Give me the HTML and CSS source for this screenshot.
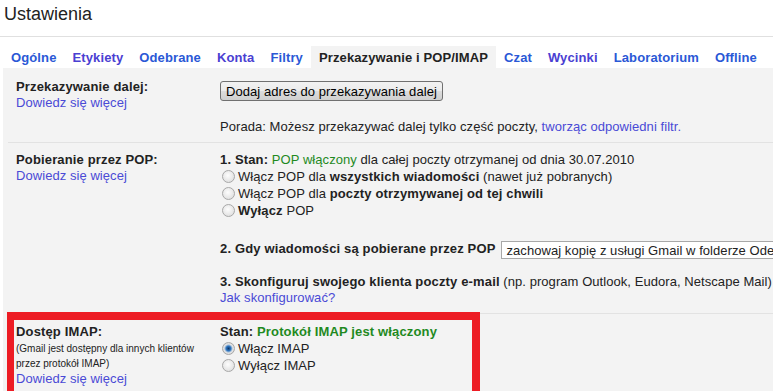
FILE: index.html
```html
<!DOCTYPE html>
<html lang="pl">
<head>
    <meta charset="UTF-8">
    <meta name="viewport" content="width=device-width, initial-scale=1.0">
    <title>Ustawienia</title>
    <link rel="stylesheet" href="styles.css">
</head>
<body>
    <div class="header">Ustawienia</div>

    <div class="tabs">
        <a class="tab" href="#">Ogólne</a>
        <a class="tab visited" href="#">Etykiety</a>
        <a class="tab" href="#">Odebrane</a>
        <a class="tab visited" href="#">Konta</a>
        <a class="tab" href="#">Filtry</a>
        <span class="tab active">Przekazywanie i POP/IMAP</span>
        <a class="tab" href="#">Czat</a>
        <a class="tab visited" href="#">Wycinki</a>
        <a class="tab" href="#">Laboratorium</a>
        <a class="tab" href="#">Offline</a>
    </div>

    <div class="panel">
        <div class="row first">
            <div class="label-col">
                <div class="label">Przekazywanie dalej:</div>
                <a class="link" href="#">Dowiedz się więcej</a>
            </div>
            <div class="value-col">
                <button type="button" class="btn">Dodaj adres do przekazywania dalej</button>
                <p class="tip">Porada: Możesz przekazywać dalej tylko część poczty, <a class="link" href="#">tworząc odpowiedni filtr.</a></p>
            </div>
        </div>

        <div class="row">
            <div class="label-col">
                <div class="label">Pobieranie przez POP:</div>
                <a class="link" href="#">Dowiedz się więcej</a>
            </div>
            <div class="value-col">
                <div class="line"><b>1. Stan:</b> <span class="on">POP włączony</span> dla całej poczty otrzymanej od dnia 30.07.2010</div>
                <label class="choice"><input type="radio" name="pop">Włącz POP dla <b>wszystkich wiadomości</b> (nawet już pobranych)</label>
                <label class="choice"><input type="radio" name="pop">Włącz POP dla <b>poczty otrzymywanej od tej chwili</b></label>
                <label class="choice"><input type="radio" name="pop"><b>Wyłącz</b> POP</label>

                <div class="step step-two">
                    <b>2. Gdy wiadomości są pobierane przez POP</b>
                    <select class="select">
                        <option>zachowaj kopię z usługi Gmail w folderze Odebrane</option>
                    </select>
                </div>

                <div class="step step-three"><b>3. Skonfiguruj swojego klienta poczty e-mail</b> (np. program Outlook, Eudora, Netscape Mail)</div>
                <a class="link how" href="#">Jak skonfigurować?</a>
            </div>
        </div>

        <div class="row imap">
            <div class="highlight"></div>
            <div class="label-col">
                <div class="label">Dostęp IMAP:</div>
                <div class="note">(Gmail jest dostępny dla innych klientów<br>przez protokół IMAP)</div>
                <a class="link" href="#">Dowiedz się więcej</a>
            </div>
            <div class="value-col">
                <div class="line"><b>Stan: <span class="on">Protokół IMAP jest włączony</span></b></div>
                <label class="choice"><input type="radio" name="imap" checked>Włącz IMAP</label>
                <label class="choice"><input type="radio" name="imap">Wyłącz IMAP</label>
            </div>
        </div>
    </div>
</body>
</html>
```

FILE: styles.css
```css
body {
    font-family: "Liberation Sans", Arial, sans-serif;
    font-size: 13px;
    letter-spacing: 0.06px;
    color: #222;
    background-color: #fff;
    margin: 0;
    padding: 0;
    overflow: hidden;
}
a {
    text-decoration: none;
}
b {
    letter-spacing: 0.15px;
}
.header {
    height: 32px;
    padding: 4px 0 0 4px;
    font-size: 18px;
    line-height: 21px;
    letter-spacing: 0;
    color: #222;
    border-bottom: 1px solid #e0e0e0;
}
.tabs {
    display: flex;
    margin: 9px 0 0 3px;
    white-space: nowrap;
}
.tab {
    padding: 0 8px;
    height: 22px;
    line-height: 23px;
    font-weight: bold;
    letter-spacing: 0.12px;
    color: #2a58d6;
}
.tab.visited {
    color: #4a40d2;
}
.tab.active {
    color: #222;
    background-color: #f3f3f3;
}
.panel {
    margin-left: 3px;
    background-color: #f3f3f3;
    padding-bottom: 40px;
}
.row {
    position: relative;
    display: flex;
    margin-left: 5px;
    padding: 8px 0 8px 8px;
    border-top: 1px solid #e2e2e2;
    white-space: nowrap;
}
.row.first {
    border-top: none;
    padding-top: 11px;
    padding-bottom: 7px;
}
.row.imap {
    padding-top: 9px;
}
.label-col {
    width: 204px;
    flex-shrink: 0;
}
.label {
    font-weight: bold;
    letter-spacing: 0.15px;
    line-height: 17px;
}
.row.first .label {
    line-height: 16px;
}
.link {
    display: block;
    color: #4a4ad6;
    line-height: 16px;
}
.tip .link {
    display: inline;
}
.value-col {
    flex: 1;
}
.btn {
    display: block;
    height: 20px;
    margin-top: 2px;
    padding: 0 5px;
    font-family: "Liberation Sans", Arial, sans-serif;
    font-size: 13px;
    letter-spacing: 0.06px;
    color: #000;
    border: 1px solid #707070;
    border-radius: 3px;
    background: linear-gradient(#f2f2f2, #ebebeb 50%, #dddddd 50%, #cfcfcf);
}
.tip {
    margin: 17px 0 0;
    line-height: 17px;
}
.line,
.choice {
    display: block;
    line-height: 17px;
}
.on {
    color: #1f8a1f;
}
.choice input {
    appearance: none;
    -webkit-appearance: none;
    width: 13px;
    height: 13px;
    margin: 0 3px 0 2px;
    vertical-align: -2px;
    border: 1px solid #a8a8a8;
    border-radius: 50%;
    background: radial-gradient(circle at 45% 40%, #fdfdfd, #d8d8d8);
    box-sizing: border-box;
}
.choice input:checked {
    background: radial-gradient(circle, #0d3566 0, #2f78c4 2.5px, #9bb9d8 3.5px, #e6e6e6 4.5px, #d2d2d2 6px);
}
.step {
    line-height: 17px;
}
.step-two {
    display: flex;
    align-items: flex-start;
    margin-top: 21px;
}
.select {
    appearance: none;
    -webkit-appearance: none;
    width: 330px;
    height: 18px;
    margin: 1px 0 0 6px;
    padding: 0 0 0 4px;
    font-family: "Liberation Sans", Arial, sans-serif;
    font-size: 13px;
    letter-spacing: 0.06px;
    color: #222;
    background-color: #fff;
    border: 1px solid #a8a8a8;
    border-radius: 0;
}
.step-three {
    margin-top: 14px;
}
.how {
    line-height: 15px;
}
.note {
    margin-top: 1px;
    font-size: 10px;
    letter-spacing: 0;
    line-height: 15px;
}
.imap .link {
    line-height: 15px;
}
.highlight {
    position: absolute;
    left: -1px;
    top: -2px;
    width: 473px;
    height: 100px;
    border-style: solid;
    border-color: #ed1c24;
    border-width: 8px 8px 8px 7px;
    box-sizing: border-box;
}
```
